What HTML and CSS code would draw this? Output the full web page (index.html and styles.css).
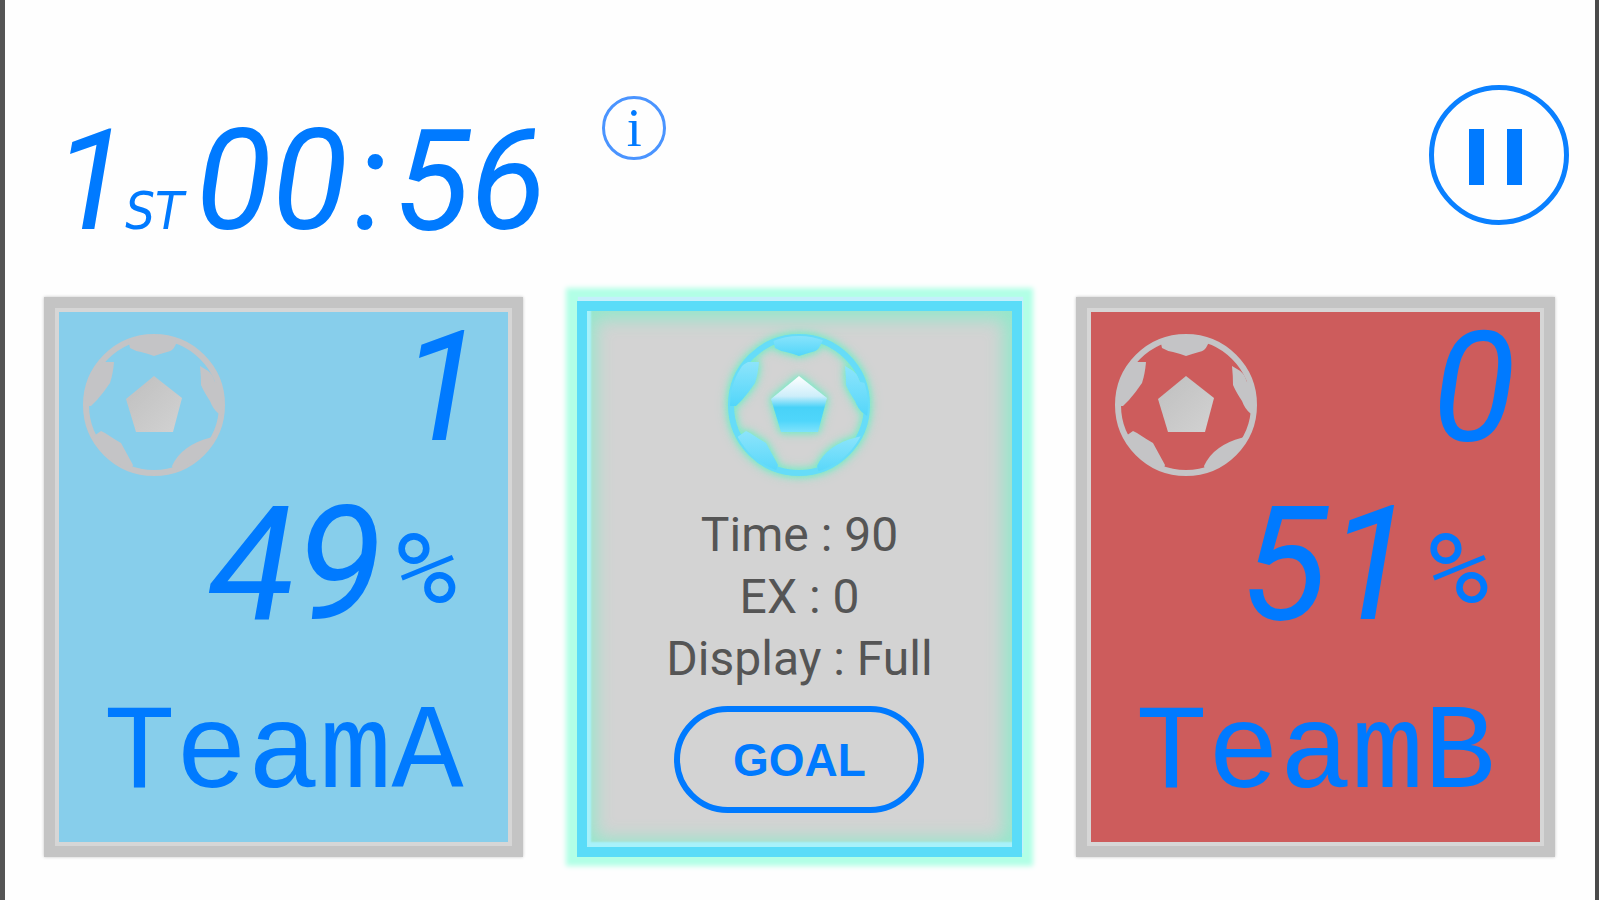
FILE: index.html
```
<!DOCTYPE html>
<html lang="en">
<head>
<meta charset="utf-8">
<meta name="viewport" content="width=device-width, initial-scale=1">
<title>Match possession</title>
<link rel="stylesheet" href="styles.css">
</head>
<body>
<svg class="defs" width="0" height="0" aria-hidden="true">
  <defs>
    <clipPath id="ball-clip"><circle cx="71" cy="71" r="69"/></clipPath>
    <linearGradient id="silver" x1="0" y1="0" x2="1" y2="1">
      <stop offset="0" stop-color="#bfbfbf"/><stop offset="1" stop-color="#d2d2d2"/>
    </linearGradient>
    <linearGradient id="ice" x1="0" y1="0" x2="0" y2="1">
      <stop offset="0" stop-color="#ffffff"/><stop offset=".36" stop-color="#cdeefa"/>
      <stop offset=".56" stop-color="#48d2f8"/><stop offset=".8" stop-color="#4fd6fb"/><stop offset="1" stop-color="#7fe2fb"/>
    </linearGradient>
    <linearGradient id="ice-patch" x1="0" y1="0" x2="0" y2="1">
      <stop offset="0" stop-color="#8de4fb"/><stop offset="1" stop-color="#52d6fa"/>
    </linearGradient>
    <symbol id="ball" viewBox="0 0 142 142">
      <circle class="ball-ring" cx="71" cy="71" r="68"/>
      <g class="ball-patch" clip-path="url(#ball-clip)">
        <path d="M44 0L47 14Q52 17 58 18Q66 20 71 22Q77 20 84 18Q90 17 92 12L98 0Z"/>
        <path d="M20 28L31 28Q30 40 27 49Q21 58 14 66L8 72L0 72L0 40Z"/>
        <path d="M117 32L122 35Q129 38 132 48L142 50L142 84L135 79Q130 75 127 67Q121 58 118 51Q118 42 117 32Z"/>
        <path d="M18 97L22 99Q31 105 38 109Q44 120 50 131L46 142L20 132L8 104Z"/>
        <path d="M134 102L126 104Q114 107 104 114Q94 121 89 132L92 142L120 134Z"/>
      </g>
      <path class="ball-core" d="M71 42L99 64L90 98L53 98L43 65Z"/>
    </symbol>
  </defs>
</svg>
<div class="app">
  <header class="bar">
    <div class="timer">
      <span class="half">1</span><span class="ordinal">ST</span><span class="clock">00<span class="colon">:</span>56</span>
    </div>
    <button class="info" type="button" aria-label="Information">i</button>
    <button class="pause" type="button" aria-label="Pause">
      <svg viewBox="0 0 140 140" aria-hidden="true"><path d="M40 44h15v56H40zM78 44h15v56H78z"/></svg>
    </button>
  </header>
  <main class="board">
    <section class="team team-a">
      <div class="top">
        <svg class="ball" aria-hidden="true"><use href="#ball"/></svg>
        <span class="score">1</span>
      </div>
      <div class="share"><span class="value">49</span><span class="percent">%</span></div>
      <h2 class="name">TeamA</h2>
    </section>
    <section class="center">
      <svg class="ball" aria-hidden="true"><use href="#ball"/></svg>
      <div class="settings">
        <p>Time : 90</p>
        <p>EX : 0</p>
        <p>Display : Full</p>
      </div>
      <button class="goal" type="button">GOAL</button>
    </section>
    <section class="team team-b">
      <div class="top">
        <svg class="ball" aria-hidden="true"><use href="#ball"/></svg>
        <span class="score">0</span>
      </div>
      <div class="share"><span class="value">51</span><span class="percent">%</span></div>
      <h2 class="name">TeamB</h2>
    </section>
  </main>
</div>
</body>
</html>
```
FILE: styles.css
```
* { box-sizing: border-box; }
body { margin: 0; background: #fefefe; color: #007aff; font-family: Roboto, sans-serif; }
button { padding: 0; background: transparent; color: inherit; cursor: pointer; }
.defs { position: absolute; }

.app {
  min-height: 100vh;
  display: flex;
  flex-direction: column;
  border-left: 5px solid #555;
  border-right: 4px solid #4a4a4a;
}

.bar { display: flex; align-items: flex-start; padding: 85px 26px 66px 48px; }
.timer { display: flex; align-items: baseline; margin-top: 46px; font-style: italic; line-height: 100px; }
.half, .clock { font-size: 140px; }
.colon { margin: 0 6px; }
.ordinal { font-family: "DejaVu Sans Condensed", "DejaVu Sans", sans-serif; font-size: 52px; line-height: 40px; margin: 0 12px 0 -4px; }
.info {
  width: 64px; height: 64px; margin: 11px 0 0 56px;
  border: 3px solid #4a94ff; border-radius: 50%;
  font: 54px/56px "Liberation Serif", serif;
}
.pause { width: 140px; height: 140px; margin-left: auto; border: 5px solid #0a80ff; border-radius: 50%; }
.pause svg { display: block; width: 140px; height: 140px; margin: -5px; fill: #007aff; }

.board { flex: 1; display: grid; grid-template-columns: 14fr 13fr 14fr; gap: 54px; padding: 0 40px 43px 39px; }

.ball { width: 142px; height: 142px; flex: none; display: block; }
.ball-ring { fill: none; stroke: var(--line); stroke-width: 6; }
.ball-patch { fill: var(--patch); }
.ball-core { fill: var(--core); }

.team {
  --line: #c4c4c6;
  --patch: #c4c4c6;
  --core: url(#silver);
  display: flex; flex-direction: column;
  padding: 22px 24px 47px;
  border: 15px solid #c4c4c4;
  box-shadow: 0 0 3px #c4c4c4;
  outline: 4px solid #d6d6d6; outline-offset: -15px;
}
.team-a { background: #87ceeb; }
.team-b { background: #cd5c5c; }
.top { display: flex; justify-content: space-between; align-items: flex-start; }
.score { font-size: 154px; line-height: 108px; font-style: italic; }
.share { display: flex; justify-content: flex-end; align-items: flex-end; margin: 32px 27px 0 0; line-height: 114px; font-style: italic; }
.value { font-size: 160px; }
.percent { margin-left: 14px; font-family: "DejaVu Sans Mono", monospace; font-size: 100px; line-height: 106px; }
.name { margin: auto 0 0; text-align: center; font: 400 120px/80px "Liberation Mono", monospace; }

.center {
  --line: #66dcf8;
  --patch: url(#ice-patch);
  --core: url(#ice);
  display: flex; flex-direction: column; align-items: center;
  margin-top: 4px;
  padding: 23px 12px 34px;
  background: #d3d3d3;
  border: 10px solid #5adcf8;
  box-shadow:
    1px -4px 1px #c4f0fb,
    0 -2px 5px 11px #b2ffe6,
    inset 4px -5px 2px #a8f2fa,
    inset 0 0 18px 8px #93e8cb;
}
.center .ball { filter: drop-shadow(0 0 3px #7eeac6) drop-shadow(0 0 4px #7eeac6); }
.settings { margin-top: 28px; text-align: center; color: #555; font-size: 48px; line-height: 62px; }
.settings p { margin: 0; }
.goal {
  width: 250px; height: 107px; margin-top: auto;
  border: 6px solid #007aff; border-radius: 54px;
  font: 700 46px/60px "Liberation Sans", sans-serif;
}
```
